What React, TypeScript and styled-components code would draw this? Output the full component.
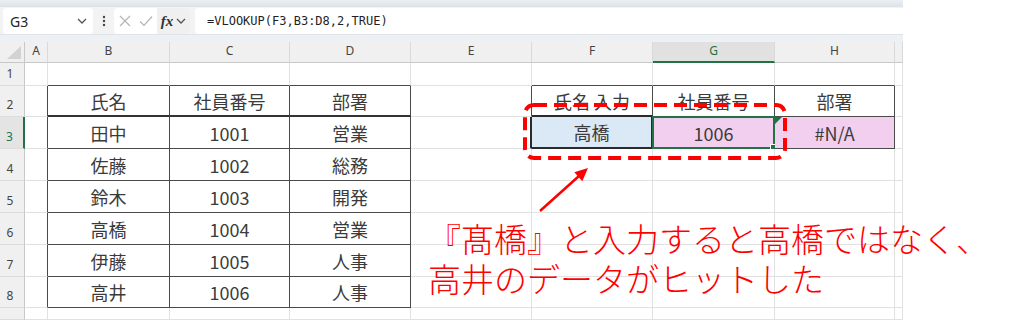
import React from "react";
import styled, { createGlobalStyle } from "styled-components";

const GlobalStyle = createGlobalStyle`
  html, body { margin: 0; padding: 0; background: #ffffff; }
  body { font-family: "Noto Sans", "Noto Sans CJK JP", sans-serif; }
`;

const Page = styled.div`
  position: relative;
  width: 1024px;
  height: 320px;
  overflow: hidden;
  background: #ffffff;
`;

const Workbook = styled.div`
  width: 903px;
  display: flex;
  flex-direction: column;
`;

const TopStrip = styled.div`
  height: 7px;
  background: linear-gradient(#eceff2, #dde2e7);
`;

const FormulaRow = styled.div`
  display: flex;
  align-items: flex-end;
  height: 27px;
  padding-left: 3px;
  background: #f3f3f3;
`;

const NameBox = styled.div`
  box-sizing: border-box;
  width: 90px;
  height: 26px;
  background: #ffffff;
  border-radius: 4px;
  display: flex;
  align-items: center;
  justify-content: space-between;
  padding: 0 6px 0 7px;
  font-size: 14px;
  color: #242424;
`;

const Dots = styled.div`
  width: 21px;
  height: 26px;
  display: flex;
  align-items: center;
  justify-content: center;
`;

const EditBox = styled.div`
  width: 76px;
  height: 26px;
  background: #ffffff;
  border-radius: 4px;
  display: flex;
  align-items: stretch;
  overflow: hidden;
`;

const IconSlot = styled.div<{ $w: number }>`
  width: ${(p) => p.$w}px;
  display: flex;
  align-items: center;
  justify-content: center;
`;

const FxSlot = styled.div`
  flex: 1;
  display: flex;
  align-items: center;
  justify-content: center;
  gap: 3px;
  background: #f0f0f0;
`;

const FxText = styled.span`
  font-family: "Liberation Serif", serif;
  font-style: italic;
  font-weight: 700;
  font-size: 15px;
  color: #333333;
`;

const FormulaInput = styled.div`
  flex: 1;
  margin-left: 5px;
  height: 26px;
  background: #ffffff;
  border-radius: 4px 0 0 4px;
  display: flex;
  align-items: center;
  padding-left: 12px;
  font-family: "DejaVu Sans Mono", "Liberation Mono", monospace;
  font-size: 12px;
  color: #1f1f1f;
`;

const Band = styled.div`
  height: 7px;
  background: #eef1f4;
  border-top: 1px solid #e0e4e8;
`;

const Grid = styled.div<{ $cols: string; $rows: string }>`
  display: grid;
  grid-template-columns: ${(p) => p.$cols};
  grid-template-rows: ${(p) => p.$rows};
`;

const Corner = styled.div`
  position: relative;
  box-sizing: border-box;
  background: #f0f0f0;
  border-right: 1px solid #c8c8c8;
  border-bottom: 1px solid #c8c8c8;
  &::after {
    content: "";
    position: absolute;
    right: 3px;
    bottom: 3px;
    width: 0;
    height: 0;
    border-left: 14px solid transparent;
    border-bottom: 13px solid #d2d2d2;
  }
`;

const ColHeader = styled.div<{ $active?: boolean }>`
  box-sizing: border-box;
  display: flex;
  align-items: center;
  justify-content: center;
  padding-bottom: 3px;
  background: ${(p) => (p.$active ? "#e1e1e1" : "#f0f0f0")};
  border-right: 1px solid #d9d9d9;
  border-bottom: ${(p) => (p.$active ? "2px solid #217346" : "1px solid #c8c8c8")};
  font-size: 12px;
  color: ${(p) => (p.$active ? "#217346" : "#444444")};
`;

const RowHeader = styled.div<{ $active?: boolean }>`
  box-sizing: border-box;
  display: flex;
  align-items: flex-end;
  justify-content: center;
  padding: 0 4px 3px 0;
  background: ${(p) => (p.$active ? "#e4e4e4" : "#f0f0f0")};
  border-right: ${(p) => (p.$active ? "2px solid #217346" : "1px solid #c8c8c8")};
  border-bottom: 1px solid #dcdcdc;
  font-size: 12px;
  line-height: 16px;
  color: ${(p) => (p.$active ? "#217346" : "#444444")};
`;

const Cell = styled.div<{ $right: string; $bottom: string; $bg?: string }>`
  position: relative;
  box-sizing: border-box;
  display: flex;
  align-items: center;
  justify-content: center;
  border-right: ${(p) => p.$right};
  border-bottom: ${(p) => p.$bottom};
  background: ${(p) => p.$bg ?? "#ffffff"};
  font-family: "Noto Sans CJK JP", "Noto Sans", sans-serif;
  font-size: 18px;
  line-height: 22px;
  color: #3b3b3b;
  white-space: nowrap;
`;

const Selection = styled.div`
  position: absolute;
  left: -1px;
  top: -1px;
  right: -1px;
  bottom: -1px;
  border: 2px solid #217346;
  pointer-events: none;
`;

const FillHandle = styled.div`
  position: absolute;
  right: -4px;
  bottom: -4px;
  width: 5px;
  height: 5px;
  background: #217346;
  border: 1px solid #ffffff;
`;

const ErrorMark = styled.div`
  position: absolute;
  left: 0;
  top: 0;
  width: 0;
  height: 0;
  border-top: 7px solid #1e7145;
  border-right: 7px solid transparent;
`;

const Overlay = styled.svg`
  position: absolute;
  left: 0;
  top: 0;
  pointer-events: none;
`;

const Annotation = styled.div`
  position: absolute;
  left: 428px;
  top: 218px;
  font-family: "Noto Sans CJK JP", sans-serif;
  font-size: 33px;
  line-height: 40px;
  font-weight: 300;
  color: #ff0000;
  white-space: nowrap;
`;

const COL_W = [25, 23, 122, 120, 121, 121, 121, 122, 120, 8];
const ROW_H = [21, 23, 31, 32, 32, 32, 32, 32, 31, 12];
const LETTERS = ["", "A", "B", "C", "D", "E", "F", "G", "H", ""];

const DATA: Record<string, string> = {
  "2-2": "氏名",
  "3-2": "社員番号",
  "4-2": "部署",
  "2-3": "田中",
  "3-3": "1001",
  "4-3": "営業",
  "2-4": "佐藤",
  "3-4": "1002",
  "4-4": "総務",
  "2-5": "鈴木",
  "3-5": "1003",
  "4-5": "開発",
  "2-6": "高橋",
  "3-6": "1004",
  "4-6": "営業",
  "2-7": "伊藤",
  "3-7": "1005",
  "4-7": "人事",
  "2-8": "高井",
  "3-8": "1006",
  "4-8": "人事",
  "6-2": "氏名 入力",
  "7-2": "社員番号",
  "8-2": "部署",
  "6-3": "高橋",
  "7-3": "1006",
  "8-3": "#N/A",
};

const BG: Record<string, string> = {
  "6-3": "#dbe9f7",
  "7-3": "#f2cfee",
  "8-3": "#f2cfee",
};

const GRID = "1px solid #e1e1e1";
const TABLE = "1px solid #4a4a4a";
const THICK = "2px solid #2a2a2a";

const inTable = (c: number, r: number) =>
  (c >= 2 && c <= 4 && r >= 2 && r <= 8) || (c >= 6 && c <= 8 && r >= 2 && r <= 3);

const rightBorder = (c: number, r: number) => {
  if (r === 3 && (c === 5 || c === 6)) return THICK;
  if (inTable(c, r) || inTable(c + 1, r)) return TABLE;
  return GRID;
};

const bottomBorder = (c: number, r: number) => {
  if (r === 2 && c >= 2 && c <= 4) return "2px solid #333333";
  if (c === 6 && (r === 2 || r === 3)) return THICK;
  if (inTable(c, r) || inTable(c, r + 1)) return TABLE;
  return GRID;
};

const Chevron = () => (
  <svg width="10" height="6" viewBox="0 0 10 6">
    <path d="M1 1 L5 5 L9 1" fill="none" stroke="#555" strokeWidth="1.3" />
  </svg>
);

export default function App() {
  const cells: React.ReactNode[] = [];
  for (let r = 0; r < ROW_H.length; r++) {
    for (let c = 0; c < COL_W.length; c++) {
      const key = `${c}-${r}`;
      if (r === 0 && c === 0) {
        cells.push(<Corner key={key} />);
      } else if (r === 0) {
        cells.push(
          <ColHeader key={key} $active={c === 7}>
            {LETTERS[c]}
          </ColHeader>
        );
      } else if (c === 0) {
        cells.push(
          <RowHeader key={key} $active={r === 3}>
            {r <= 8 ? r : ""}
          </RowHeader>
        );
      } else {
        cells.push(
          <Cell key={key} $right={rightBorder(c, r)} $bottom={bottomBorder(c, r)} $bg={BG[key]}>
            {DATA[key]}
            {key === "7-3" && (
              <Selection>
                <FillHandle />
              </Selection>
            )}
            {key === "8-3" && <ErrorMark />}
          </Cell>
        );
      }
    }
  }

  return (
    <Page>
      <GlobalStyle />
      <Workbook>
        <TopStrip />
        <FormulaRow>
          <NameBox>
            <span>G3</span>
            <Chevron />
          </NameBox>
          <Dots>
            <svg width="4" height="12" viewBox="0 0 4 12">
              <circle cx="2" cy="2" r="1.2" fill="#444" />
              <circle cx="2" cy="6" r="1.2" fill="#444" />
              <circle cx="2" cy="10" r="1.2" fill="#444" />
            </svg>
          </Dots>
          <EditBox>
            <IconSlot $w={21}>
              <svg width="12" height="12" viewBox="0 0 12 12">
                <path d="M1 1 L11 11 M11 1 L1 11" stroke="#b4b4b4" strokeWidth="1.2" />
              </svg>
            </IconSlot>
            <IconSlot $w={22}>
              <svg width="14" height="12" viewBox="0 0 14 12">
                <path d="M1 6.5 L5 10.5 L13 1.5" fill="none" stroke="#b4b4b4" strokeWidth="1.2" />
              </svg>
            </IconSlot>
            <FxSlot>
              <FxText>fx</FxText>
              <Chevron />
            </FxSlot>
          </EditBox>
          <FormulaInput>=VLOOKUP(F3,B3:D8,2,TRUE)</FormulaInput>
        </FormulaRow>
        <Band />
        <Grid
          $cols={COL_W.map((w) => `${w}px`).join(" ")}
          $rows={ROW_H.map((h) => `${h}px`).join(" ")}
        >
          {cells}
        </Grid>
      </Workbook>
      <Overlay width="1024" height="320" viewBox="0 0 1024 320">
        <rect
          x="525"
          y="105"
          width="260"
          height="53"
          rx="9"
          ry="9"
          fill="none"
          stroke="#ff0000"
          strokeWidth="4"
          strokeDasharray="13 7"
        />
        <line x1="540" y1="211" x2="579" y2="176" stroke="#ff0000" strokeWidth="2.5" />
        <polygon points="588,168 582.3,181.2 574.3,172.2" fill="#ff0000" />
      </Overlay>
      <Annotation>
        『髙橋』と入力すると高橋ではなく、
        <br />
        高井のデータがヒットした
      </Annotation>
    </Page>
  );
}
